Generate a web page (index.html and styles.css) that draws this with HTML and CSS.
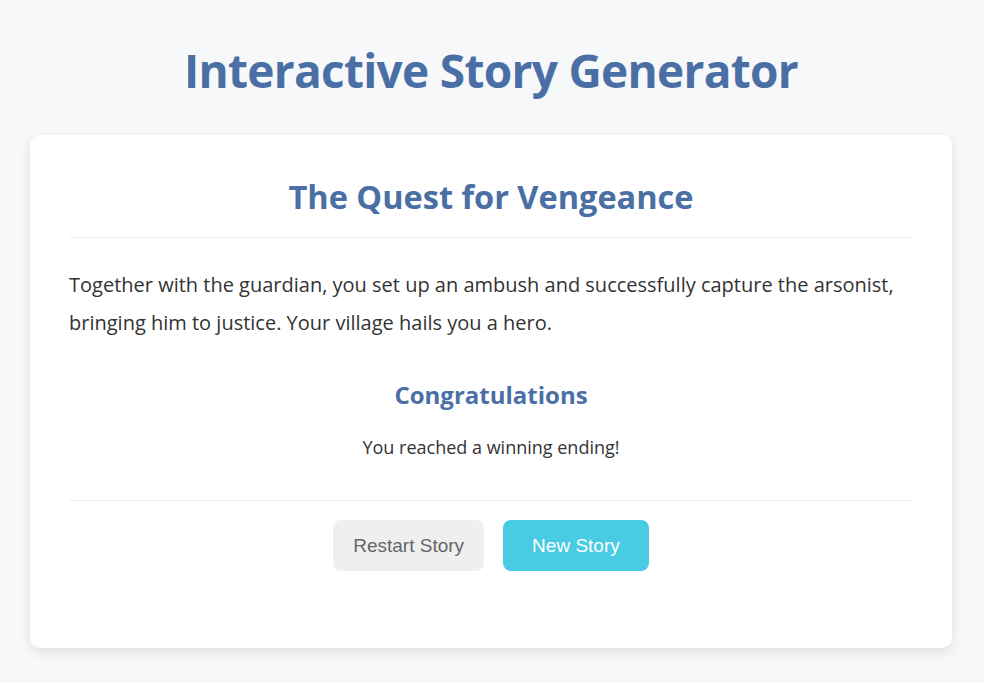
FILE: index.html
```html
<!DOCTYPE html>
<html lang="en">
<head>
<meta charset="utf-8">
<title>Interactive Story Generator</title>
<link rel="stylesheet" href="styles.css">
</head>
<body>
<div class="app">
  <h1 class="app-title">Interactive Story Generator</h1>
  <div class="card">
    <h2 class="story-title">The Quest for Vengeance</h2>
    <p class="story-text">Together with the guardian, you set up an ambush and successfully capture the arsonist, bringing him to justice. Your village hails you a hero.</p>
    <div class="ending">
      <h3 class="ending-title">Congratulations</h3>
      <p class="ending-text">You reached a winning ending!</p>
    </div>
    <div class="actions">
      <button class="btn btn-secondary">Restart Story</button>
      <button class="btn btn-primary">New Story</button>
    </div>
  </div>
</div>
</body>
</html>
```

FILE: styles.css
```css
* { box-sizing: border-box; }
body {
  margin: 0;
  background: #f7f8fa;
  font-family: "Open Sans", "Noto Sans", sans-serif;
  color: #333;
}
.app {
  padding: 41px 32px 35px 30px;
}
.app-title {
  margin: 0 0 36px;
  font-size: 46px;
  letter-spacing: -0.7px;
  line-height: 58px;
  font-weight: 700;
  color: #4a6fa5;
  text-align: center;
}
.card {
  background: #fff;
  border-radius: 10px;
  box-shadow: 0 4px 12px rgba(0, 0, 0, 0.1);
  padding: 39px 39px 40px;
}
.story-title {
  margin: 0;
  font-size: 32.5px;
  line-height: 46px;
  font-weight: 700;
  color: #4a6fa5;
  text-align: center;
  padding-bottom: 17px;
  border-bottom: 1px solid #eee;
}
.story-text {
  margin: 28px 0 0;
  font-size: 20px;
  line-height: 38px;
}
.ending {
  margin-top: 38px;
  text-align: center;
  padding-bottom: 39px;
  border-bottom: 1px solid #eee;
}
.ending-title {
  margin: 0;
  font-size: 24px;
  line-height: 30px;
  font-weight: 700;
  color: #4a6fa5;
}
.ending-text {
  margin: 23px 0 0;
  font-size: 18px;
  line-height: 28px;
}
.actions {
  display: flex;
  justify-content: center;
  gap: 19px;
  margin-top: 19px;
  margin-bottom: 37px;
}
.btn {
  border: none;
  border-radius: 8px;
  height: 51px;
  padding: 0 20px;
  font-family: "Liberation Sans", Arial, sans-serif;
  font-size: 19px;
  cursor: pointer;
}
.btn-secondary {
  background: #efefef;
  color: #666;
}
.btn-primary {
  background: #4acbe4;
  color: #fff;
  padding: 0 29px;
}
```
